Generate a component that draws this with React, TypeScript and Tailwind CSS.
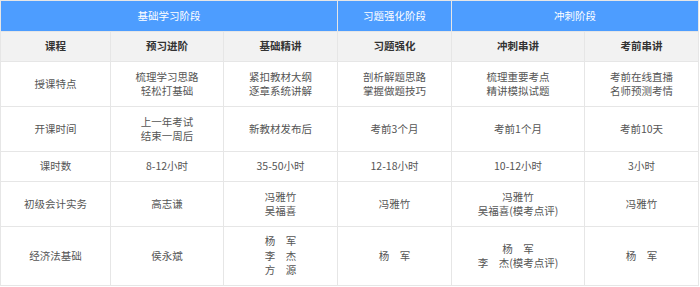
import React from "react";

const td = "border border-[#e6e6e6] text-center align-middle px-1 leading-[14.5px]";

const rows: { h: string; cells: React.ReactNode[] }[] = [
  {
    h: "h-[45px]",
    cells: [
      "授课特点",
      <>梳理学习思路<br />轻松打基础</>,
      <>紧扣教材大纲<br />逐章系统讲解</>,
      <>剖析解题思路<br />掌握做题技巧</>,
      <>梳理重要考点<br />精讲模拟试题</>,
      <>考前在线直播<br />名师预测考情</>,
    ],
  },
  {
    h: "h-[45px]",
    cells: [
      "开课时间",
      <>上一年考试<br />结束一周后</>,
      "新教材发布后",
      "考前3个月",
      "考前1个月",
      "考前10天",
    ],
  },
  {
    h: "h-[30px]",
    cells: ["课时数", "8-12小时", "35-50小时", "12-18小时", "10-12小时", "3小时"],
  },
  {
    h: "h-[45px]",
    cells: [
      "初级会计实务",
      "高志谦",
      <>冯雅竹<br />吴福喜</>,
      "冯雅竹",
      <>冯雅竹<br />吴福喜(模考点评)</>,
      "冯雅竹",
    ],
  },
  {
    h: "h-[59px]",
    cells: [
      "经济法基础",
      "侯永斌",
      <>杨　军<br />李　杰<br />方　源</>,
      "杨　军",
      <>杨　军<br />李　杰(模考点评)</>,
      "杨　军",
    ],
  },
];

export default function App() {
  return (
    <div
      className="w-[700px] h-[287px] bg-white text-[10.5px] text-[#555]"
      style={{ fontFamily: '"Noto Sans CJK SC", "Noto Sans", sans-serif' }}
    >
      <table className="table-fixed border-collapse w-[698px]">
        <colgroup>
          <col className="w-[110px]" />
          <col className="w-[113px]" />
          <col className="w-[114px]" />
          <col className="w-[114px]" />
          <col className="w-[133px]" />
          <col className="w-[114px]" />
        </colgroup>
        <tbody>
          <tr className="h-[31px] bg-[#4d9dff] text-white">
            <td colSpan={3} className={td + " border-[#dfe9f5]"}>基础学习阶段</td>
            <td className={td + " border-[#dfe9f5]"}>习题强化阶段</td>
            <td colSpan={2} className={td + " border-[#dfe9f5]"}>冲刺阶段</td>
          </tr>
          <tr className="h-[30px] bg-[#f2f2f2] text-[#333] font-bold">
            {["课程", "预习进阶", "基础精讲", "习题强化", "冲刺串讲", "考前串讲"].map((t) => (
              <td key={t} className={td}>{t}</td>
            ))}
          </tr>
          {rows.map((r, i) => (
            <tr key={i} className={r.h}>
              {r.cells.map((c, j) => (
                <td key={j} className={td}>{c}</td>
              ))}
            </tr>
          ))}
        </tbody>
      </table>
    </div>
  );
}
